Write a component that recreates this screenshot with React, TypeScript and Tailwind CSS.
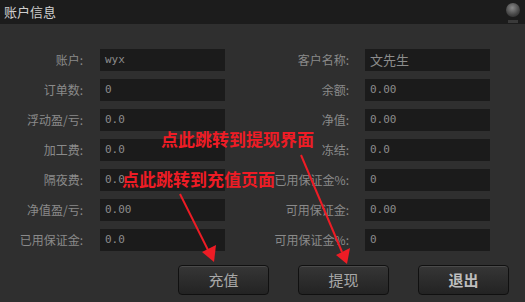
import React from "react";

const rows: [string, string, string, string][] = [
  ["账户:", "wyx", "客户名称:", "文先生"],
  ["订单数:", "0", "余额:", "0.00"],
  ["浮动盈/亏:", "0.0", "净值:", "0.00"],
  ["加工费:", "0.0", "冻结:", "0.0"],
  ["隔夜费:", "0.0", "已用保证金%:", "0"],
  ["净值盈/亏:", "0.00", "可用保证金:", "0.00"],
  ["已用保证金:", "0.0", "可用保证金%:", "0"],
];

const cjk = { fontFamily: '"Noto Sans CJK SC", "Noto Sans", sans-serif' };
const mono = { fontFamily: '"DejaVu Sans Mono", "Noto Sans CJK SC", monospace' };

function Field({ v }: { v: string }) {
  const isCjk = /[^\x00-\x7f]/.test(v);
  return (
    <div
      className={`w-[125px] h-[22px] bg-[#1b1b1b] flex items-center pl-[5px] text-[#8c8c8c] ${isCjk ? "text-[13px]" : "text-[11px]"}`}
      style={isCjk ? cjk : mono}
    >
      {v}
    </div>
  );
}

function Btn({ label, bold }: { label: string; bold?: boolean }) {
  return (
    <div
      className={`w-[91px] h-[30px] rounded-[4px] border border-[#101010] bg-gradient-to-b from-[#363636] to-[#232323] shadow-[inset_0_1px_0_#4a4a4a] flex items-center justify-center text-[15px] ${bold ? "font-bold text-[#bdbdbd]" : "text-[#a8a8a8]"}`}
      style={cjk}
    >
      {label}
    </div>
  );
}

export default function App() {
  return (
    <div className="relative w-[525px] h-[302px] bg-[#2f2f2f] overflow-hidden" style={cjk}>
      <div className="h-[24px] bg-[#1c1c1c] flex items-center pl-[4px] text-[13px] text-[#cfcfcf] relative">
        账户信息
        <div className="absolute left-[506px] top-[3px] w-[14px] h-[14px] rounded-full bg-[radial-gradient(circle_at_45%_35%,#8a8a8a,#444_60%,#222_100%)]" />
        <div className="absolute left-[508px] top-[20px] w-[10px] h-[3px] bg-[#3a3a3a]" />
      </div>
      <div className="flex flex-col gap-[8px] pt-[25px]">
        {rows.map((r, i) => (
          <div key={i} className="flex items-center h-[22px]">
            <div className="w-[83px] text-right text-[12px] text-[#8a8a8a] whitespace-nowrap">{r[0]}</div>
            <div className="ml-[17px]">
              <Field v={r[1]} />
            </div>
            <div className="w-[124px] text-right text-[12px] text-[#8a8a8a] whitespace-nowrap">{r[2]}</div>
            <div className="ml-[16px]">
              <Field v={r[3]} />
            </div>
          </div>
        ))}
      </div>
      <div className="flex gap-[29px] pl-[178px] mt-[14px]">
        <Btn label="充值" />
        <Btn label="提现" />
        <Btn label="退出" bold />
      </div>

      <div className="absolute left-[161px] top-[130px] text-[17px] font-bold leading-none text-[#ee1c25] whitespace-nowrap">
        点此跳转到提现界面
      </div>
      <div className="absolute left-[122px] top-[170px] text-[17px] font-bold leading-none text-[#ee1c25] whitespace-nowrap">
        点此跳转到充值页面
      </div>
      <svg className="absolute left-0 top-0" width="525" height="302" viewBox="0 0 525 302">
        <line x1="180" y1="194" x2="209" y2="252" stroke="#ee1c25" strokeWidth="2" />
        <polygon points="214,262 202,252 216,245" fill="#ee1c25" />
        <line x1="301" y1="155" x2="342" y2="252" stroke="#ee1c25" strokeWidth="2" />
        <polygon points="347,264 336,255 350,248" fill="#ee1c25" />
      </svg>
    </div>
  );
}
